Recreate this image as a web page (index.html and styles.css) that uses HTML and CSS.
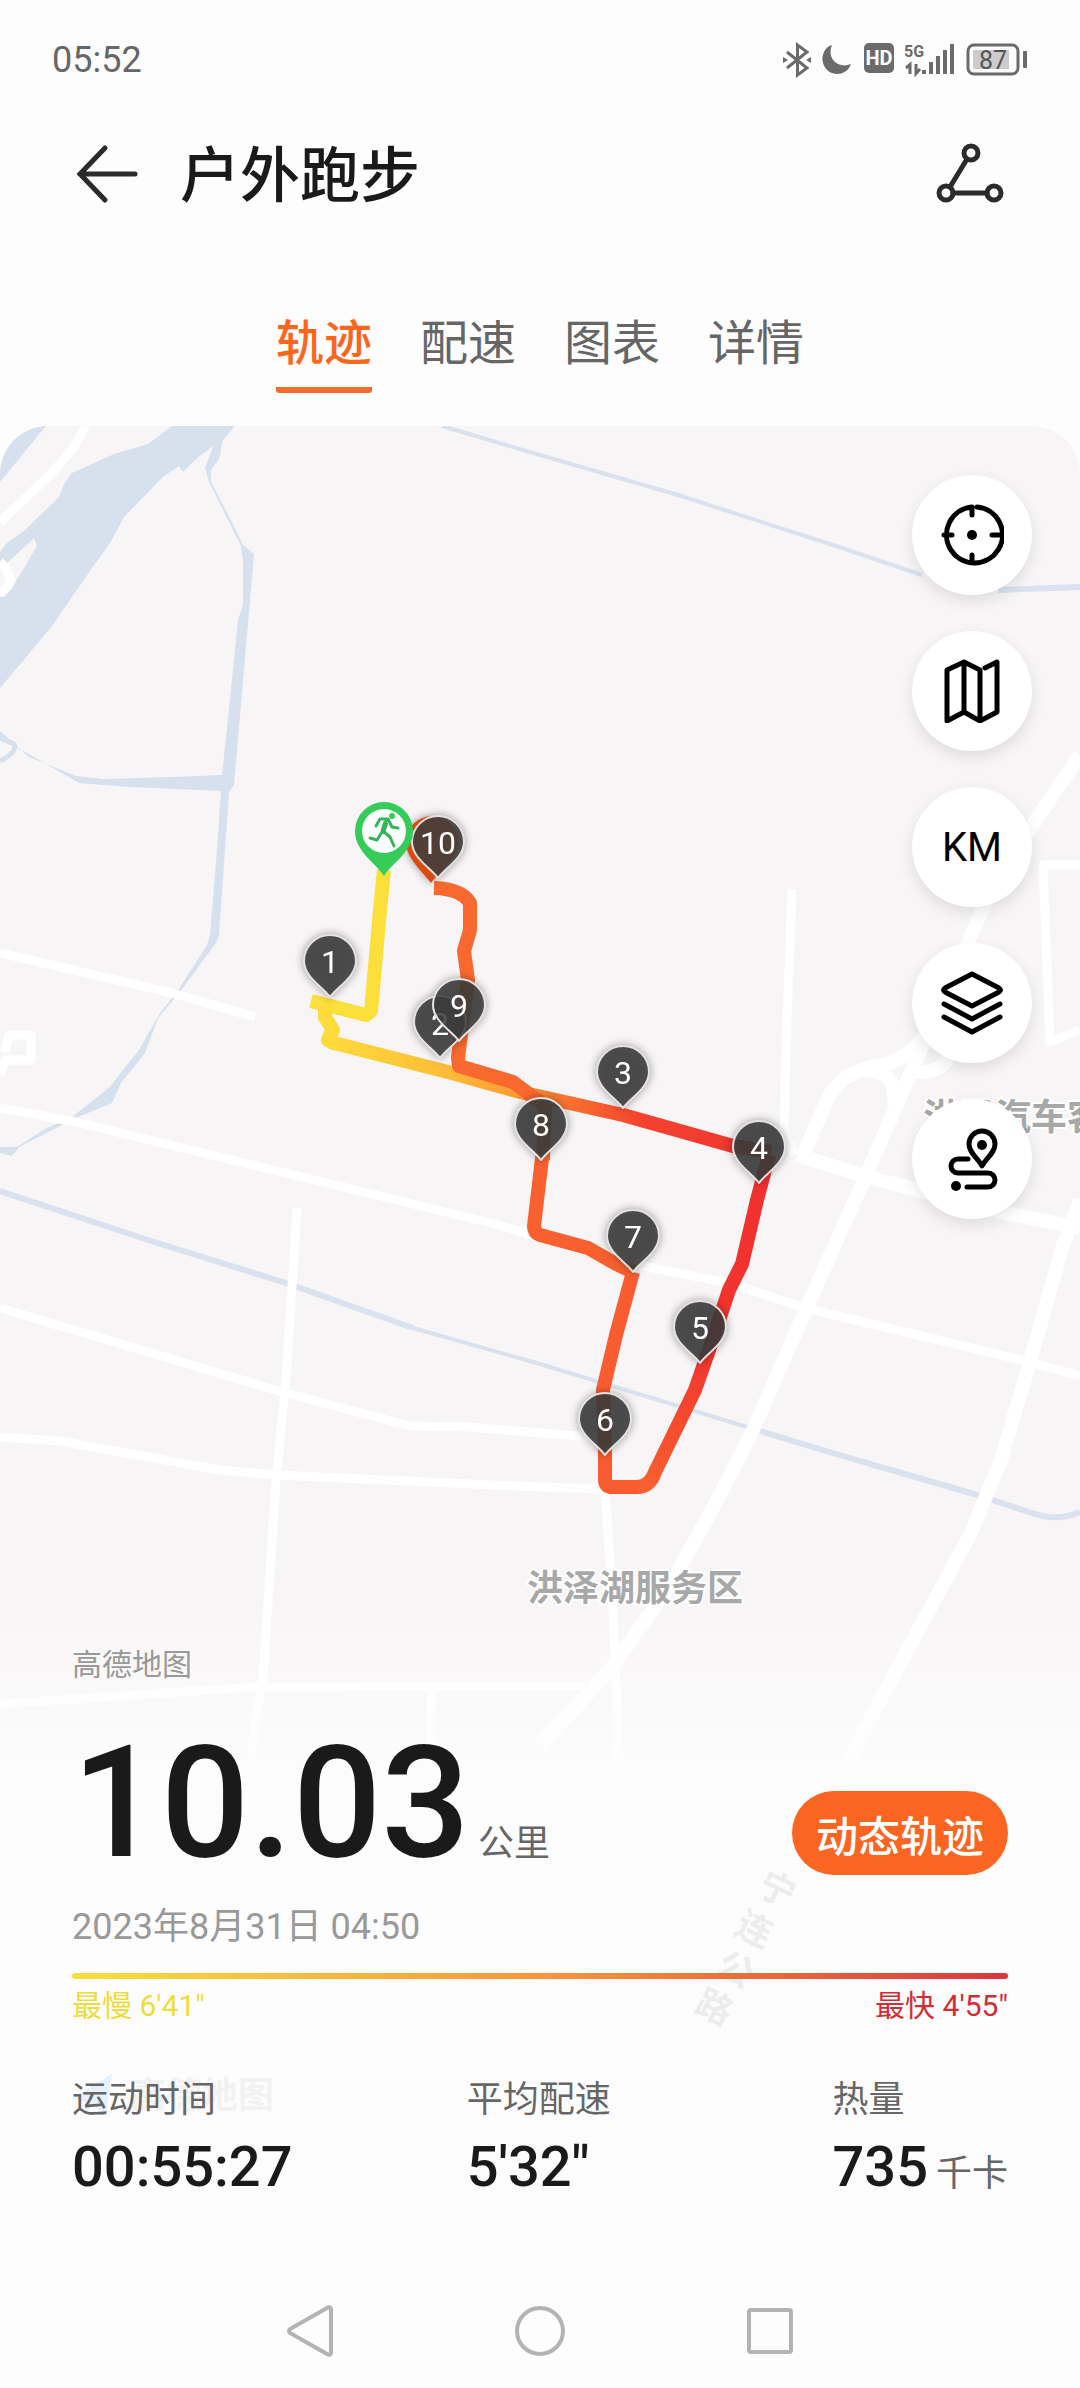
FILE: index.html
```html
<!DOCTYPE html>
<html lang="zh-CN">
<head>
  <meta charset="UTF-8" />
  <meta name="viewport" content="width=device-width, initial-scale=1.0"/>
  <title>户外跑步</title>
  <link rel="stylesheet" href="styles.css">
</head>
<body>
  <div class="status-bar">
    <span class="clock">05:52</span>
    <svg class="status-icons" width="246" height="36" viewBox="783 42 246 36" aria-hidden="true">
      <path class="bt" d="M788 52 L808 68 L798.500 75 V45 L808 52 L788 68"/>
      <path class="solid" d="M784 57 l5 3 -5 3zM812 57 l-5 3 5 3z"/>
      <path class="solid" d="M833 45 C825 47 822 57 824 63 C828 77 847 78 852 64 C841 69 827 60 833 45Z"/>
      <rect class="solid" x="865" y="43" width="30" height="30" rx="5"/>
      <text class="hd" x="880" y="65">HD</text>
      <text class="five-g" x="905" y="57">5G</text>
      <path class="arrows" d="M907 68 L911 64.500 V74 M917 64 V73.500 L921 69"/>
      <path class="solid" d="M923 70h4v4h-4zM930 62h4v12h-4zM937 56h4v18h-4zM944 50h4v24h-4zM951 44h4v30h-4z"/>
      <rect class="cell" x="969" y="45" width="50" height="29" rx="6"/>
      <rect class="charge" x="974" y="50" width="36" height="19"/>
      <text class="percent" x="994" y="69">87</text>
      <rect class="solid" x="1024" y="51" width="4" height="17" rx="1"/>
    </svg>
  </div>

  <header class="title-bar">
    <button type="button" class="icon-button" aria-label="返回">
      <svg width="64" height="64" viewBox="0 0 64 64"><path d="M29 6 L4 32 L29 58 M4 32 H59"/></svg>
    </button>
    <h1>户外跑步</h1>
    <button type="button" class="icon-button" aria-label="分享">
      <svg width="72" height="64" viewBox="936 142 72 64">
        <path d="M969 159 L952 187 M955 193 H989"/>
        <circle cx="973" cy="153" r="7"/><circle cx="948" cy="193" r="7"/><circle cx="996" cy="193" r="7"/>
      </svg>
    </button>
  </header>

  <nav class="tabs">
    <a class="tab active" href="#track">轨迹</a>
    <a class="tab" href="#pace">配速</a>
    <a class="tab" href="#chart">图表</a>
    <a class="tab" href="#detail">详情</a>
  </nav>

  <main class="track" id="track">
    <svg class="map" viewBox="0 426 1080 1848" preserveAspectRatio="xMidYMin slice">
      <defs>
        <linearGradient id="leg-b" gradientUnits="userSpaceOnUse" x1="329" y1="0" x2="760" y2="0">
          <stop offset="0" stop-color="#fddb3a"/>
          <stop offset=".28" stop-color="#fdbb38"/>
          <stop offset=".44" stop-color="#fb9a33"/>
          <stop offset=".56" stop-color="#f9702e"/>
          <stop offset=".72" stop-color="#f5432f"/>
          <stop offset="1" stop-color="#ef352f"/>
        </linearGradient>
        <linearGradient id="leg-c" gradientUnits="userSpaceOnUse" x1="0" y1="1150" x2="0" y2="1487">
          <stop offset="0" stop-color="#f0302f"/>
          <stop offset=".6" stop-color="#f0352f"/>
          <stop offset="1" stop-color="#f95f30"/>
        </linearGradient>
        <path id="pin" d="M0 0 C-7 -10 -26 -20 -26 -36 A26 26 0 0 1 26 -36 C26 -20 7 -10 0 0Z"/>
      </defs>

      <!-- water -->
      <g class="water">
        <path d="M0 426H46L0 482Z"/>
        <path d="M172 426 L148 444 L114 454 L72 473 L64 484 L59 497 L24 531 L7 543 L0 552 V562 L7 563 L34 538 L37 546 L24 568 L12 588 L0 598 V688 L52 626 L90 571 L110 543 L124 517 L164 476 L179 466 L183 472 L196 459 L213 446 L205 468 L209 482 L241 546 L243 560 V605 L238 620 L232 680 L222 775 L172 777 L103 779 L76 776 L29 757 L0 731 V740 L27 753 L79 783 L130 787 L221 791 L217 850 L210 935 L207 945 L177 992 L160 1013 L139 1050 L119 1075 L110 1087 L72 1117 L45 1129 L17 1147 L0 1147 V1153 L12 1156 L19 1147 L76 1118 L112 1103 L121 1083 L145 1053 L158 1018 L180 992 L216 943 L219 935 L229 792 L234 785 L254 554 L243 545 L231 520 L211 482 L211 470 L219 459 L223 440 L235 426Z"/>
      </g>
      <path class="creek" d="M0 738 L14 744 Q18 752 0 761"/>
      <path class="canal-thin" d="M442 426 L540 455 L678 495 L833 545 L922 575"/>
      <path class="canal" d="M998 590 L1080 587"/>
      <path class="canal" d="M0 1191 L148 1240 L286 1283 L413 1328"/>
      <path class="canal-thin" d="M413 1328 L540 1364 L747 1427"/>
      <path class="canal" d="M747 1427 L829 1452 L974 1494 L1032 1513 Q1057 1522 1080 1512"/>

      <!-- roads, casing first and then the surface -->
      <g id="roads" class="road-casing">
        <path d="M86 426 L72 450 L50 475 L0 522M0 562 Q14 574 8 586 L0 594"/>
        <path d="M0 953 L172 993 L255 1017M0 1108 L76 1122 L265 1168 L499 1225 L540 1238 L643 1266 L729 1283 L805 1308 L1022 1360 L1080 1376"/>
        <path d="M5 1052 L9 1035 H31 V1060 H5 L0 1075"/>
        <path d="M297 1208 L286 1380 L276 1480 L263 1680 L255 1720 L241 1880"/>
        <path d="M0 1308 L165 1357 L282 1392 L410 1426 L468 1427 L540 1433 L605 1438"/>
        <path d="M0 1437 L60 1441 L220 1470 L276 1475 L540 1487 L605 1489"/>
        <path d="M0 1704 L255 1687 L585 1686M432 1690 L430 1760"/>
        <path d="M605 1489 L612 1590 L616 1680 L622 1900"/>
        <path d="M792 889 L787 1020 L784 1130 L794 1155"/>
        <path d="M1080 865 H1043 L1050 1042 L1080 1030"/>
      </g>
      <use href="#roads" class="road-fill"/>
      <g id="highways" class="highway-casing">
        <path d="M797 1155 L864 1176 L1005 1213 L1080 1228"/>
        <path d="M1080 1200 L1063 1245 L1029 1365 L1001 1460 L970 1535 L902 1660 L840 1775"/>
        <path d="M803 1155 L828 1098 Q842 1072 877 1066 Q905 1062 926 1035"/>
        <path d="M862 1070 Q899 1070 894 1106"/>
        <path d="M906 1070 Q938 1078 950 1055"/>
        <path d="M1080 755 L1029 830 L991 890 L925 1040 L864 1180 L807 1307 L753 1430 L712 1510 L667 1590 L610 1670 L540 1745"/>
      </g>
      <use href="#highways" class="highway-fill"/>

      <g class="place">
        <text x="527" y="1601">洪泽湖服务区</text>
        <text x="923" y="1130">洪泽汽车客运站</text>
      </g>
      <g class="road-name">
        <text transform="translate(777 1890) rotate(26)" y="12">宁</text>
        <text transform="translate(754 1930) rotate(26)" y="12">连</text>
        <text transform="translate(735 1970) rotate(26)" y="12">公</text>
        <text transform="translate(714 2008) rotate(26)" y="12">路</text>
      </g>
      <path class="vendor-mark" d="M72 2098 L112 2074 L106 2114 L92 2106 L84 2114 L86 2102Z"/>
      <text class="vendor-name" x="130" y="2108">高德地图</text>

      <!-- run track -->
      <g class="route">
        <path stroke="#fbdf3b" d="M384 870 L380 910 L371 1011 L366 1015 L311 1001"/>
        <path stroke="#fddb3a" d="M325 1006 L325 1017 L333 1030 L328 1040 L336 1044"/>
        <path stroke="url(#leg-b)" d="M330 1042 L448 1072 L520 1092 L623 1115 L680 1131 L733 1146 L771 1152"/>
        <path stroke="url(#leg-c)" d="M769 1155 L757 1200 L742 1264 L729 1290 L709 1350 L695 1390 L655 1472 Q650 1487 637 1487 H609"/>
        <path stroke="#f95c30" d="M637 1487 H612 Q605 1487 605 1480 V1455 L603 1390 L616 1335 L633 1272"/>
        <path stroke="#f9602f" d="M633 1272 L616 1264 L588 1248 L540 1235 Q534 1233 534 1226 L543 1150"/>
        <path stroke="#f9692f" d="M543 1160 L545 1106 L513 1082 L459 1066 L458 1058 L468 980 L464 951 L470 930 V903 Q462 889 434 888"/>
      </g>

      <!-- kilometre pins, each placed by its tip -->
      <g class="pins">
        <g transform="translate(431 883)"><path class="finish" d="M0 0 C-9 -12 -25 -25 -25 -41 A26 26 0 0 1 27 -41 C27 -25 9 -12 0 0Z"/></g>
        <g transform="translate(440 1058)"><use href="#pin"/><text y="-23">2</text></g>
        <g transform="translate(330 997)"><use href="#pin"/><text y="-24">1</text></g>
        <g transform="translate(623 1108)"><use href="#pin"/><text y="-24">3</text></g>
        <g transform="translate(759 1183)"><use href="#pin"/><text y="-24">4</text></g>
        <g transform="translate(700 1363)"><use href="#pin"/><text y="-24">5</text></g>
        <g transform="translate(605 1455)"><use href="#pin"/><text y="-24">6</text></g>
        <g transform="translate(633 1272)"><use href="#pin"/><text y="-24">7</text></g>
        <g transform="translate(541 1160)"><use href="#pin"/><text y="-24">8</text></g>
        <g transform="translate(459 1041)"><use href="#pin"/><text y="-24">9</text></g>
        <g transform="translate(438 878)"><use href="#pin"/><text y="-24">10</text></g>
      </g>
      <g class="start-pin">
        <path d="M384 876 C377 864 355 852 355 831 A29 29 0 0 1 413 831 C413 852 391 864 384 876Z"/>
        <circle class="disc" cx="384" cy="831" r="22"/>
        <circle cx="392" cy="816" r="3"/>
        <path class="runner" d="M376 826 L380 819 L388 819 L392 827 L398 828 M386 821 L382 832 L377 840 L370 838 M383 831 L390 837 L394 846"/>
        <path class="torso" d="M386 822 L383 831"/>
      </g>
    </svg>

    <div class="tools">
      <button type="button" class="tool" aria-label="定位">
        <svg width="64" height="64" viewBox="0 0 64 64"><path d="M32 12 V4 A28 28 0 1 0 37 4 M32 60 V52 M4 32 H12 M60 32 H52"/><circle class="dot" cx="32" cy="32" r="5"/></svg>
      </button>
      <button type="button" class="tool" aria-label="地图类型">
        <svg width="64" height="64" viewBox="0 0 64 64"><path d="M45 9 L57 3 V53 L40 62 L24 53 L7 62 V11 L24 3 L40 11 V62 M24 3 V53"/></svg>
      </button>
      <button type="button" class="tool">KM</button>
      <button type="button" class="tool" aria-label="图层">
        <svg width="64" height="64" viewBox="0 0 64 64"><path d="M32 3 L59 17 Q62 19 59 21 L32 35 L5 21 Q2 19 5 17Z M4 33 L32 48 L60 33 M4 46 L32 61 L60 46"/></svg>
      </button>
      <button type="button" class="tool" aria-label="路线">
        <svg width="64" height="64" viewBox="0 0 64 64"><path d="M42 39 C38 31 29 26 29 17 A13 13 0 0 1 55 17 C55 26 46 31 42 39Z M28 32 H18 A7 7 0 0 0 18 46 H48 A7 7 0 0 1 48 60 H27"/><circle class="dot" cx="42" cy="18" r="5"/><circle class="dot" cx="16" cy="59" r="5"/></svg>
      </button>
    </div>

    <section class="summary">
      <p class="source">高德地图</p>
      <div class="distance">
        <p><strong>10.03</strong><span class="unit">公里</span></p>
        <button type="button" class="replay">动态轨迹</button>
      </div>
      <p class="date">2023年8月31日 04:50</p>
      <div class="pace-scale"></div>
      <div class="pace-ends"><span class="slow">最慢 6'41"</span><span class="fast">最快 4'55"</span></div>
      <dl class="stats">
        <div><dt>运动时间</dt><dd>00:55:27</dd></div>
        <div><dt>平均配速</dt><dd>5'32"</dd></div>
        <div><dt>热量</dt><dd>735<span class="unit">千卡</span></dd></div>
      </dl>
    </section>
  </main>

  <footer class="system-nav">
    <button type="button" aria-label="后退"><svg width="56" height="56" viewBox="0 0 56 56"><path d="M49 6 V50 Q48 53 45 51 L8 30 Q6 28 8 26 L45 5 Q48 3 49 6Z"/></svg></button>
    <button type="button" aria-label="主页"><svg width="56" height="56" viewBox="0 0 56 56"><circle cx="28" cy="28" r="23"/></svg></button>
    <button type="button" aria-label="最近任务"><svg width="56" height="56" viewBox="0 0 56 56"><rect x="7" y="7" width="42" height="42" rx="2"/></svg></button>
  </footer>
</body>
</html>
```

FILE: styles.css
```css
* { box-sizing: border-box; }
body { font-family: Roboto, "Noto Sans CJK SC", sans-serif; margin: 0; min-height: 100vh; display: flex; flex-direction: column; background: #fdfdfd; color: #1a1a1a; }
h1, p, dl, dd { margin: 0; }
button { font: inherit; color: inherit; border: 0; padding: 0; background: none; }
svg { display: block; }

.status-bar { display: flex; justify-content: space-between; align-items: center; height: 120px; padding: 0 52px; }
.clock { font-size: 36px; color: #666; }
.status-icons { fill: #6b6b6b; }
.bt, .arrows { fill: none; stroke: #6b6b6b; stroke-width: 3; }
.hd { font-size: 20px; font-weight: 700; fill: #fff; text-anchor: middle; }
.five-g { font-size: 16px; font-weight: 700; }
.cell { fill: none; stroke: #6b6b6b; stroke-width: 3; }
.charge { fill: #ccc; }
.percent { font-size: 25px; fill: #555; text-anchor: middle; }

.title-bar { display: flex; align-items: center; height: 108px; padding: 0 74px 0 76px; }
.title-bar h1 { flex: 1; margin-left: 40px; padding-top: 6px; font-size: 60px; font-weight: 500; line-height: 72px; }
.icon-button svg { fill: none; stroke: #2b2b2b; stroke-width: 5; stroke-linecap: round; }

.tabs { display: flex; justify-content: center; gap: 48px; margin: 86px 0 33px; }
.tab { padding-bottom: 13px; border-bottom: 6px solid transparent; font-size: 48px; line-height: 60px; color: #666; text-decoration: none; }
.tab.active { border-bottom-color: #f26c2c; border-radius: 3px; color: #fa6520; font-weight: 500; }

.track { position: relative; flex: 1; display: flex; flex-direction: column; overflow: hidden; border-radius: 48px; background: #f8f5f6; }
.map { position: absolute; top: 0; left: 0; width: 100%; height: 100%; }
.map path { fill: none; stroke-linejoin: round; }
.map .water path { fill: #d6e1ed; }
.creek { stroke: #d6e1ed; stroke-width: 5; }
.canal { stroke: #d9e2ee; stroke-width: 6; }
.canal-thin { stroke: #d9e2ee; stroke-width: 4; }
.road-casing { stroke: #f0eeef; stroke-width: 12; }
.road-fill { stroke: #fff; stroke-width: 9; }
.highway-casing { stroke: #e9e8e9; stroke-width: 17; }
.highway-fill { stroke: #fff; stroke-width: 14; }
#roads, #highways { stroke: inherit; stroke-width: inherit; }
.place { font-size: 36px; font-weight: 700; fill: #a8a8a8; stroke: #fff; stroke-width: 4; paint-order: stroke; }
.road-name { font-size: 36px; font-weight: 700; fill: #555; text-anchor: middle; }
.map .vendor-mark { fill: #2080e0; }
.vendor-name { font-size: 36px; font-weight: 700; fill: #888; }
.route { stroke-width: 14; }
.pins { font-size: 32px; fill: #fff; text-anchor: middle; filter: drop-shadow(0 0 4px rgba(0, 0, 0, .4)); }
.map #pin { fill: rgba(60, 60, 60, .88); stroke: #e6e2e2; stroke-width: 2; }
.map .finish { fill: #dd4a10; }
.start-pin, .map .start-pin path { fill: #35cc5a; }
.start-pin .disc { fill: #fff; }
.map .start-pin .runner { fill: none; stroke: #35b45a; stroke-width: 3; stroke-linecap: round; }
.map .start-pin .torso { stroke: #35b45a; stroke-width: 5; }

.tools { position: relative; align-self: flex-end; display: flex; flex-direction: column; gap: 36px; margin: 49px 48px 0 0; }
.tool { display: flex; align-items: center; justify-content: center; width: 120px; height: 120px; border-radius: 50%; background: #fff; box-shadow: 0 6px 16px rgba(0, 0, 0, .1); color: #000; font-size: 40px; }
.tool svg { fill: none; stroke: #000; stroke-width: 5; stroke-linecap: round; stroke-linejoin: round; }
.tool .dot { fill: #000; stroke: none; }

.summary { position: relative; margin-top: auto; padding: 46px 72px 68px; background: linear-gradient(rgba(253, 253, 253, 0), rgba(253, 253, 253, .9) 170px); }
.source { font-size: 30px; line-height: 36px; color: #999; }
.distance { display: flex; justify-content: space-between; align-items: flex-end; margin-top: 48px; }
.distance strong { font-size: 156px; font-weight: 500; line-height: 144px; }
.unit { margin-left: 8px; font-size: 36px; font-weight: 400; color: #666; }
.replay { width: 216px; height: 84px; border-radius: 42px; background: #fa6522; color: #fff; font-size: 42px; font-weight: 500; }
.date { margin-top: 28px; font-size: 36px; line-height: 48px; color: #999; }
.pace-scale { height: 6px; margin-top: 22px; border-radius: 3px; background: linear-gradient(to right, #f5e03c, #f8973a 50%, #dc3540); }
.pace-ends { display: flex; justify-content: space-between; margin-top: 9px; font-size: 30px; line-height: 36px; }
.slow { color: #eedc3c; }
.fast { color: #d42c34; }
.stats { display: grid; grid-template-columns: 396fr 367fr 173fr; margin-top: 52px; }
.stats dt { font-size: 36px; line-height: 48px; color: #666; }
.stats dd { margin-top: 11px; font-size: 56px; font-weight: 500; line-height: 64px; white-space: nowrap; }

.system-nav { display: flex; justify-content: center; align-items: center; gap: 174px; height: 114px; }
.system-nav svg { fill: none; stroke: #b3b3b3; stroke-width: 4; }
```
